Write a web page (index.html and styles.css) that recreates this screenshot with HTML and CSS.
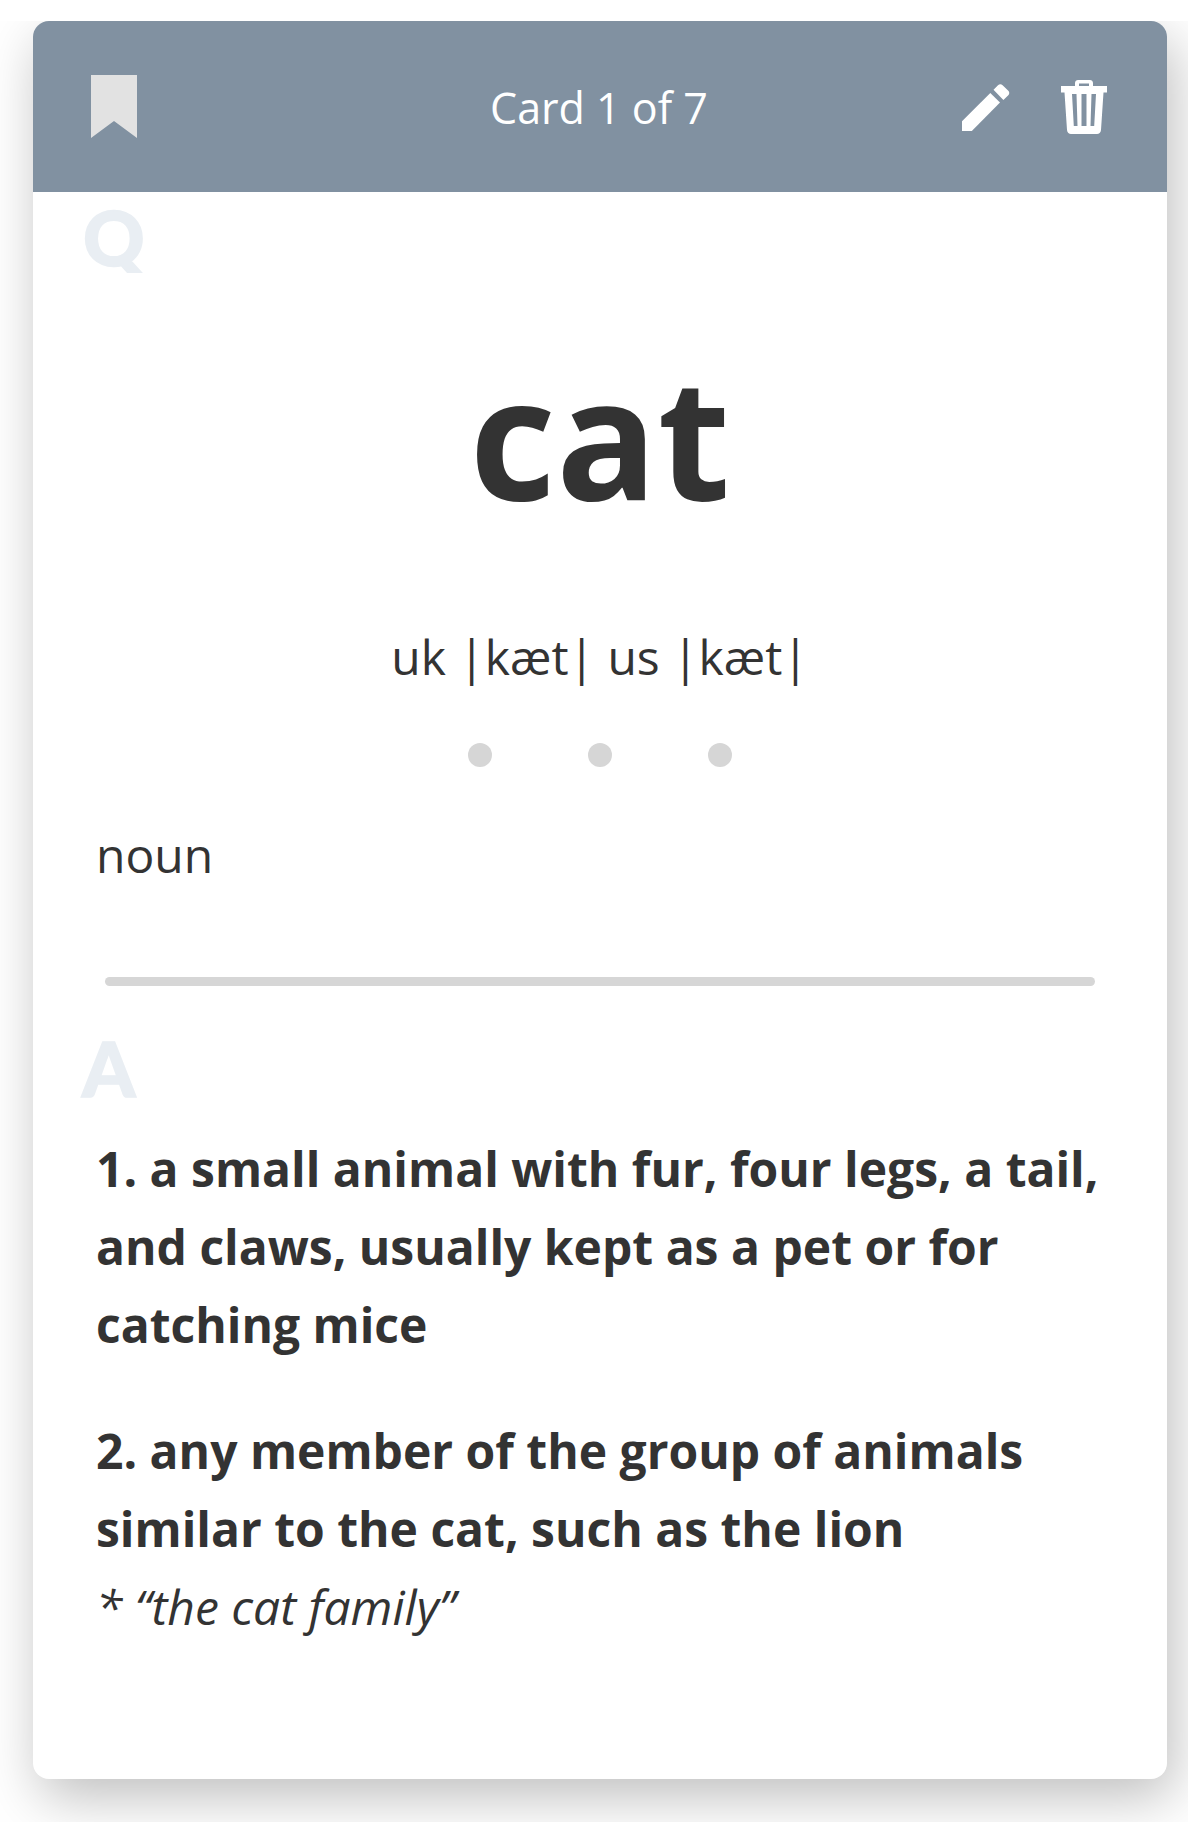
FILE: index.html
```html
<!DOCTYPE html>
<html lang="en">
<head>
<meta charset="utf-8">
<title>Card 1 of 7</title>
<link rel="stylesheet" href="styles.css">
</head>
<body>
<main class="stage">
  <article class="card">
    <header class="bar">
      <svg class="bookmark" viewBox="0 0 46 63" aria-hidden="true"><path d="M0 0H46V63L23 46L0 63Z"/></svg>
      <h1 class="count">Card 1 of 7</h1>
      <div class="tools">
        <svg class="pencil" viewBox="0 0 48 48" aria-hidden="true"><path d="M0 38.2V48H9.8L38 19.6L28.300 9.900Z"/><path d="M31.500 6.700L36 2.200C37.300 .9 39.300 .9 40.600 2.200L46.300 7.700C47.600 9 47.600 11 46.300 12.300L41.400 17Z"/></svg>
        <svg class="trash" viewBox="0 0 46 54" aria-hidden="true"><path fill-rule="evenodd" d="M14 6V3C14 1 15.500 0 17 0H29C30.500 0 32 1 32 3V6H46V12.500H42.500L40 50C39.800 52.500 38 54 36 54H10C8 54 6.200 52.500 6 50L3.500 12.500H0V6ZM18 6H28V3.500H18ZM11 14L12.800 46H16.500L15.500 14ZM20.500 14V46H25.500V14ZM30.500 14L29.500 46H33.200L35 14Z"/></svg>
      </div>
    </header>
    <section class="question">
      <div class="mark mark-q">Q</div>
      <div class="front">
        <h2 class="word">cat</h2>
        <p class="phon">uk |kæt| us |kæt|</p>
        <div class="dots"><span></span><span></span><span></span></div>
        <p class="pos">noun</p>
      </div>
    </section>
    <hr class="rule">
    <section class="answer">
      <div class="mark mark-a">A</div>
      <p class="def">1. a small animal with fur, four legs, a tail, and claws, usually kept as a pet or for catching mice</p>
      <p class="def def-two">2. any member of the group of animals similar to the cat, such as the lion</p>
      <p class="example">* “the cat family”</p>
    </section>
  </article>
</main>
</body>
</html>
```

FILE: styles.css
```css
* { box-sizing: border-box; }
html, body { margin: 0; padding: 0; background: #fff; }
body { font-family: "Open Sans", "Liberation Sans", sans-serif; color: #333; }
.stage { margin-top: 21px; height: 1801px; padding: 0 21px 0 33px; overflow: hidden; }
.card {
  width: 1134px;
  height: 1758px;
  background: #fff;
  border-radius: 16px;
  overflow: hidden;
  box-shadow: 7px 18px 55px rgba(0,0,0,.26);
}
.bar {
  height: 171px;
  background: #8191a1;
  display: grid;
  grid-template-columns: 1fr auto 1fr;
  align-items: center;
  padding: 0 60px 0 58px;
}
.bookmark { width: 46px; height: 63px; fill: #e2e2e2; }
.count { margin: 2px 0 0; font-weight: 400; font-size: 43px; line-height: 54px; color: #fff; }
.tools { display: flex; justify-content: flex-end; align-items: center; gap: 51px; }
.tools svg { fill: #fff; display: block; }
.pencil { width: 48px; height: 48px; }
.trash { width: 46px; height: 54px; }
.question { height: 785px; }
.mark {
  font-family: Lato, "Liberation Sans", Arial, sans-serif;
  font-weight: 900;
  font-size: 76px;
  line-height: 70px;
  color: #e9eef3;
  -webkit-text-stroke: 1.5px #e9eef3;
}
.mark-q { height: 81px; line-height: 90px; padding-left: 50px; }
.front { position: relative; background: #fff; overflow: hidden; }
.word { margin: 67px 0 0; text-align: center; font-size: 168px; line-height: 190px; font-weight: 700; }
.phon { margin: 94px 0 0; text-align: center; font-size: 48px; line-height: 66px; font-weight: 400; }
.dots { display: flex; justify-content: center; gap: 96px; margin-top: 53px; }
.dots span { width: 24px; height: 24px; border-radius: 50%; background: #d6d6d6; }
.pos { margin: 55px 0 0 63px; font-size: 48px; line-height: 66px; font-weight: 400; }
.rule { margin: 0 0 0 72px; width: 990px; height: 9px; border: 0; border-radius: 5px; background: #d6d6d6; }
.answer { padding: 0 63px; }
.mark-a { margin: 47px 0 0 -14px; height: 97px; }
.def { margin: 0; font-size: 48px; line-height: 78px; font-weight: 700; }
.def-two { margin-top: 48px; }
.example { margin: 0; font-size: 48px; line-height: 78px; font-weight: 400; font-style: italic; }
```
